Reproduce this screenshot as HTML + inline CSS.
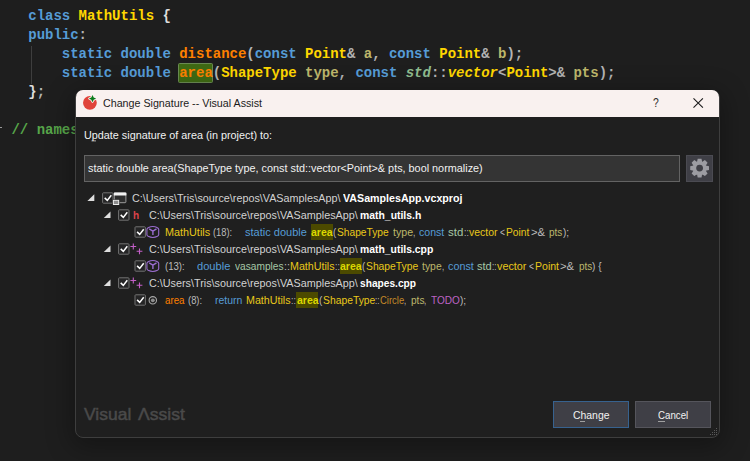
<!DOCTYPE html>
<html>
<head>
<meta charset="utf-8">
<style>
html,body{margin:0;padding:0;}
body{width:750px;height:461px;overflow:hidden;background:#1e1e1e;position:relative;font-family:"Liberation Sans",sans-serif;}
.code{position:absolute;left:-5.3px;top:7px;transform:translateY(0.25px);font-family:"Liberation Mono",monospace;font-weight:bold;font-size:14px;line-height:19px;letter-spacing:-0.015px;white-space:pre;color:#b4b4b4;}
.br{color:#dcdcdc;}
.kw{color:#569cd6;}
.cl{color:#ffd700;}
.fn{color:#ff8000;}
.vr{color:#bdb76b;}
.ns{color:#8fbc8f;font-style:italic;}
.it{font-style:italic;}
.cm{color:#57a64a;}
.chl{position:absolute;left:178px;top:63px;width:35px;height:20px;box-sizing:border-box;background:#3f6a14;border:1px solid #6a8a52;border-radius:1.5px;}
.guide{position:absolute;left:31px;top:46px;width:1px;height:38px;background:#3e3e3e;}
.dlg{position:absolute;left:75px;top:90px;width:645px;height:348px;box-sizing:border-box;border:1px solid #3e3e3e;border-radius:8px;background:#1f1f1f;box-shadow:0 6px 26px 4px rgba(0,0,0,0.3);}
.tb{position:absolute;left:76px;top:90px;width:643px;height:26.5px;background:#f9f1ef;border-radius:7px 7px 0 0;}
.abs{position:absolute;}
.s{position:absolute;white-space:pre;font-size:11px;line-height:16px;transform-origin:0 50%;color:#dcdcdc;}
.bd{font-weight:bold;}
.tt{color:#1b1b1b;}
.w{color:#f1f1f1;}
.p{color:#d2d2d2;}
.bw{color:#ffffff;}
.b{color:#569cd6;}
.y{color:#e8c81a;}
.o{color:#bdb76b;}
.or{color:#ff8000;}
.g{color:#bcbcbc;}
.n{color:#a6c8a6;}
.en{color:#c58a28;}
.m{color:#bd63c5;}
.h{color:#dcd800;}
.va{color:#4a4a4a;-webkit-text-stroke:0.45px #4a4a4a;}
.hb{position:absolute;width:22.2px;height:15.6px;background:#4c4a00;}
.inp{position:absolute;left:84px;top:155px;width:596px;height:27px;box-sizing:border-box;border:1px solid #636363;background:#343434;}
.gear{position:absolute;left:686px;top:155px;width:27px;height:27px;background:#3f3f46;box-sizing:border-box;border:1px solid #4b4b52;}
.btn{position:absolute;top:401px;width:76px;height:27px;box-sizing:border-box;background:#3f3f46;border:1px solid #55555c;}
.cb{position:absolute;width:11px;height:11px;box-sizing:border-box;border:1px solid #6e6e6e;background:#252526;}
</style>
</head>
<body>
<div class="chl"></div>
<div class="code">    <span class="kw">class</span> <span class="cl">MathUtils</span> <span class="br">{</span>
    <span class="kw">public</span>:
        <span class="kw">static</span> <span class="kw">double</span> <span class="fn">distance</span>(<span class="kw">const</span> <span class="cl">Point</span>&amp; <span class="vr">a</span>, <span class="kw">const</span> <span class="cl">Point</span>&amp; <span class="vr">b</span>);
        <span class="kw">static</span> <span class="kw">double</span> <span class="fn">area</span>(<span class="cl">ShapeType</span> <span class="vr">type</span>, <span class="kw">const</span> <span class="ns">std</span>::<span class="cl it">vector</span>&lt;<span class="cl">Point</span>&gt;&amp; <span class="vr">pts</span>);
    <span class="br">}</span>;

  <span class="cm">// namespace</span></div>
<div class="abs" style="left:0;top:127px;width:1.5px;height:1px;background:#9a9a9a"></div>
<div class="guide"></div>

<div class="dlg"></div>
<div class="tb"></div>

<!-- title bar icon + caption buttons -->
<svg class="abs" style="left:80px;top:92px" width="24" height="22" viewBox="0 0 24 22">
  <circle cx="9.9" cy="10.8" r="6.9" fill="#e0443a"/>
  <path d="M12.5 3.1 L13.8 5.3 L16 6.6 L13.8 7.9 L12.5 10.1 L11.2 7.9 L9 6.6 L11.2 5.3 Z" fill="#f9f1ef" stroke="#f9f1ef" stroke-width="1.7" stroke-linejoin="round"/>
  <path d="M12.5 3.0 L13.7 5.4 L16.1 6.6 L13.7 7.8 L12.5 10.2 L11.3 7.8 L8.9 6.6 L11.3 5.4 Z" fill="#0b7a1a"/>
</svg>
<svg class="abs" style="left:635px;top:91px" width="78" height="25" viewBox="0 0 78 25">
  <path d="M58.5 7.3 L67.9 16.7 M67.9 7.3 L58.5 16.7" stroke="#1b1b1b" stroke-width="1.1" fill="none"/>
</svg>
<span class="s" style="left:652.8px;top:95px;font-size:13px;color:#2b2b2b;transform:scaleX(0.8)">?</span>

<div class="inp"></div>
<div class="gear"></div>
<svg class="abs" style="left:686px;top:155px" width="27" height="27" viewBox="-13.6 -13.1 27 27">
  <g fill="#9c9ca2">
    <circle r="6.7"/>
    <g id="t"><path d="M-2.6 -6 L-1.9 -9.4 H1.9 L2.6 -6 V6 L1.9 9.4 H-1.9 L-2.6 6 Z"/></g>
    <use href="#t" transform="rotate(45)"/><use href="#t" transform="rotate(90)"/><use href="#t" transform="rotate(135)"/>
  </g>
  <circle r="3.4" fill="#3f3f46"/>
</svg>

<!-- highlight boxes -->
<div class="hb" style="left:310.8px;top:224px;"></div>
<div class="hb" style="left:340px;top:258px;"></div>
<div class="hb" style="left:296.2px;top:292px;"></div>

<!-- tree glyphs -->
<svg class="abs" style="left:76px;top:186px" width="100" height="125" viewBox="76 186 100 125">
  <g fill="#dedede">
    <path d="M94.3 194.3 L94.3 201.1 L87.4 201.1 Z"/>
    <path d="M110.5 211.4 L110.5 218.1 L103.8 218.1 Z"/>
    <path d="M110.5 245.4 L110.5 252.1 L103.8 252.1 Z"/>
    <path d="M110.5 279.4 L110.5 286.1 L103.8 286.1 Z"/>
  </g>
</svg>
<svg class="abs" style="left:0;top:0" width="750" height="461" viewBox="0 0 750 461">
  <defs>
    <g id="cbx"><rect x="0.6" y="0.5" width="10.4" height="10.4" rx="0.8" fill="#252526" stroke="#727272" stroke-width="1"/><path d="M2.7 5.6 L5.3 8.1 L9.3 2.9" stroke="#ffffff" stroke-width="1.5" fill="none"/></g>
    <g id="pp" fill="none" stroke="#c45fc8" stroke-width="1.1">
      <path d="M-2.9 0 H2.9 M0 -2.9 V2.9"/>
      <path d="M3.3 4.8 H9.1 M6.2 1.9 V7.7"/>
    </g>
    <g id="hex" fill="none" stroke="#9a6dcf" stroke-width="1.1">
      <path d="M-5.9 -2.8 C-5.9 -4.1 -3.2 -5.45 0 -5.45 C3.2 -5.45 5.9 -4.1 5.9 -2.8 V2.8 C5.9 4.1 3.2 5.45 0 5.45 C-3.2 5.45 -5.9 4.1 -5.9 2.8 Z"/>
      <path d="M-3.6 -3.1 L0.1 -0.9 L3.7 -3.1 M0.1 -0.9 V2.9" stroke-width="1.4"/>
    </g>
  </defs>
  <use href="#cbx" x="102" y="192.3"/><use href="#cbx" x="118" y="209.3"/><use href="#cbx" x="134.4" y="226.3"/><use href="#cbx" x="118" y="243.3"/><use href="#cbx" x="134.4" y="260.3"/><use href="#cbx" x="118" y="277.3"/><use href="#cbx" x="134.4" y="294.3"/>
  <!-- project icon -->
  <g>
    <rect x="114.3" y="193" width="11.6" height="9.7" rx="0.8" fill="#2e2e2e" stroke="#9a9a9a" stroke-width="1"/>
    <rect x="113.8" y="192.4" width="12.6" height="3.2" rx="0.6" fill="#f2f2f2"/>
    <rect x="112.6" y="199.4" width="7" height="5.8" fill="#1f1f1f"/>
    <rect x="113.4" y="200.3" width="5.3" height="4.2" fill="#8c8c8c" stroke="#ececec" stroke-width="1"/>
  </g>
  <!-- ++ icons -->
  <use href="#pp" x="133.3" y="246.5"/>
  <use href="#pp" x="133.3" y="280.5"/>
  <!-- class icons -->
  <use href="#hex" x="152.8" y="232"/>
  <use href="#hex" x="152.8" y="266"/>
  <!-- method icon -->
  <circle cx="152.8" cy="300.3" r="3.7" fill="none" stroke="#a8a8a8" stroke-width="1.1"/>
  <circle cx="152.8" cy="300.3" r="1.9" fill="#8f8f8f"/>
  <!-- resize grip -->
  <g fill="#5a5a5a">
    <rect x="716" y="428" width="1" height="1"/>
    <rect x="714" y="430" width="1" height="1"/><rect x="716" y="430" width="1" height="1"/>
    <rect x="712" y="432" width="1" height="1"/><rect x="714" y="432" width="1" height="1"/><rect x="716" y="432" width="1" height="1"/>
    <rect x="710" y="434" width="1" height="1"/><rect x="712" y="434" width="1" height="1"/><rect x="714" y="434" width="1" height="1"/><rect x="716" y="434" width="1" height="1"/>
  </g>
  <!-- access key underlines -->
  <rect x="91.5" y="140.4" width="4.5" height="1" fill="#b0b0b0"/>
</svg>
<span class="s bd" style="left:133.3px;top:206.6px;color:#dc434b;font-size:11.5px;transform:scaleX(0.88)">h</span>

<div class="btn" style="left:553px;border-color:#37628f;"></div>
<div class="btn" style="left:635px;"></div>

<div class="abs" style="left:579.5px;top:420.6px;width:5.5px;height:1px;background:#a0a0a0"></div>
<div class="abs" style="left:658.3px;top:420.6px;width:6.5px;height:1px;background:#a0a0a0"></div>
<span class="s tt" style="left:103.0px;top:95.0px;transform:scaleX(0.9715);">Change Signature -- Visual Assist</span>
<span class="s w" style="left:84.0px;top:127.0px;transform:scaleX(0.9823);">Update signature of area (in project) to:</span>
<span class="s w" style="left:88.0px;top:160.0px;transform:scaleX(0.9855);">static double area(ShapeType type, const std::vector&lt;Point&gt;&amp; pts, bool normalize)</span>
<span class="s p" style="left:132.0px;top:190.0px;transform:scaleX(0.9800);">C:\Users\Tris\source\repos\VASamplesApp\</span>
<span class="s bw bd" style="left:343.2px;top:190.0px;transform:scaleX(0.9693);">VASamplesApp.vcxproj</span>
<span class="s p" style="left:148.5px;top:207.0px;transform:scaleX(0.9814);">C:\Users\Tris\source\repos\VASamplesApp\</span>
<span class="s bw bd" style="left:360.0px;top:207.0px;transform:scaleX(0.9460);">math_utils.h</span>
<span class="s p" style="left:148.5px;top:241.0px;transform:scaleX(0.9814);">C:\Users\Tris\source\repos\VASamplesApp\</span>
<span class="s bw bd" style="left:360.0px;top:241.0px;transform:scaleX(0.9443);">math_utils.cpp</span>
<span class="s p" style="left:148.5px;top:275.0px;transform:scaleX(0.9814);">C:\Users\Tris\source\repos\VASamplesApp\</span>
<span class="s bw bd" style="left:360.0px;top:275.0px;transform:scaleX(0.9251);">shapes.cpp</span>
<span class="s y" style="left:165.0px;top:224.0px;transform:scaleX(0.9838);">MathUtils</span>
<span class="s g" style="left:213.3px;top:224.0px;transform:scaleX(0.8486);">(18):</span>
<span class="s b" style="left:245.3px;top:224.0px;transform:scaleX(1.0022);">static double</span>
<span class="s h bd" style="left:311.2px;top:224.0px;transform:scaleX(0.9540);">area</span>
<span class="s g" style="left:333.2px;top:224.0px;transform:scaleX(0.8715);">(</span>
<span class="s y" style="left:336.8px;top:224.0px;transform:scaleX(0.9289);">ShapeType</span>
<span class="s o" style="left:392.5px;top:224.0px;transform:scaleX(0.9665);">type</span>
<span class="s g" style="left:412.8px;top:224.0px;transform:scaleX(0.7837);">,</span>
<span class="s b" style="left:418.7px;top:224.0px;transform:scaleX(0.9621);">const</span>
<span class="s n" style="left:448.0px;top:224.0px;transform:scaleX(1.0417);">std</span>
<span class="s g" style="left:463.6px;top:224.0px;transform:scaleX(0.7837);">::</span>
<span class="s y" style="left:468.8px;top:224.0px;transform:scaleX(0.9510);">vector</span>
<span class="s g" style="left:499.5px;top:224.0px;transform:scaleX(0.7767);">&lt;</span>
<span class="s y" style="left:505.9px;top:224.0px;transform:scaleX(0.9331);">Point</span>
<span class="s g" style="left:530.7px;top:224.0px;transform:scaleX(1.0243);">&gt;&amp;</span>
<span class="s o" style="left:549.3px;top:224.0px;transform:scaleX(0.9123);">pts</span>
<span class="s g" style="left:563.2px;top:224.0px;transform:scaleX(0.9058);">);</span>
<span class="s g" style="left:164.8px;top:258.0px;transform:scaleX(0.8707);">(13):</span>
<span class="s b" style="left:197.3px;top:258.0px;transform:scaleX(1.0107);">double</span>
<span class="s n" style="left:234.7px;top:258.0px;transform:scaleX(0.9224);">vasamples</span>
<span class="s g" style="left:283.6px;top:258.0px;transform:scaleX(0.9796);">::</span>
<span class="s y" style="left:290.1px;top:258.0px;transform:scaleX(0.9729);">MathUtils</span>
<span class="s g" style="left:335.0px;top:258.0px;transform:scaleX(0.7837);">::</span>
<span class="s h bd" style="left:340.4px;top:258.0px;transform:scaleX(0.9540);">area</span>
<span class="s g" style="left:362.4px;top:258.0px;transform:scaleX(0.8715);">(</span>
<span class="s y" style="left:365.9px;top:258.0px;transform:scaleX(0.9379);">ShapeType</span>
<span class="s o" style="left:421.9px;top:258.0px;transform:scaleX(0.9473);">type</span>
<span class="s g" style="left:441.8px;top:258.0px;transform:scaleX(0.7184);">,</span>
<span class="s b" style="left:447.5px;top:258.0px;transform:scaleX(0.9811);">const</span>
<span class="s n" style="left:477.3px;top:258.0px;transform:scaleX(1.0009);">std</span>
<span class="s g" style="left:492.4px;top:258.0px;transform:scaleX(0.7510);">::</span>
<span class="s y" style="left:497.3px;top:258.0px;transform:scaleX(0.9810);">vector</span>
<span class="s g" style="left:528.5px;top:258.0px;transform:scaleX(0.7767);">&lt;</span>
<span class="s y" style="left:534.7px;top:258.0px;transform:scaleX(0.9570);">Point</span>
<span class="s g" style="left:560.0px;top:258.0px;transform:scaleX(1.0243);">&gt;&amp;</span>
<span class="s o" style="left:578.7px;top:258.0px;transform:scaleX(0.9055);">pts</span>
<span class="s g" style="left:592.4px;top:258.0px;transform:scaleX(0.9129);">) {</span>
<span class="s or" style="left:165.0px;top:292.0px;transform:scaleX(0.8851);">area</span>
<span class="s g" style="left:188.0px;top:292.0px;transform:scaleX(0.8545);">(8):</span>
<span class="s b" style="left:214.7px;top:292.0px;transform:scaleX(0.9530);">return</span>
<span class="s y" style="left:246.1px;top:292.0px;transform:scaleX(0.9729);">MathUtils</span>
<span class="s g" style="left:291.0px;top:292.0px;transform:scaleX(0.7837);">::</span>
<span class="s h bd" style="left:296.5px;top:292.0px;transform:scaleX(0.9585);">area</span>
<span class="s g" style="left:318.7px;top:292.0px;transform:scaleX(0.8987);">(</span>
<span class="s y" style="left:322.5px;top:292.0px;transform:scaleX(0.9397);">ShapeType</span>
<span class="s g" style="left:375.1px;top:292.0px;transform:scaleX(0.7347);">::</span>
<span class="s en" style="left:379.9px;top:292.0px;transform:scaleX(0.8604);">Circle</span>
<span class="s g" style="left:404.4px;top:292.0px;transform:scaleX(0.7184);">,</span>
<span class="s o" style="left:410.5px;top:292.0px;transform:scaleX(0.9191);">pts</span>
<span class="s g" style="left:424.2px;top:292.0px;transform:scaleX(0.7510);">,</span>
<span class="s m" style="left:431.3px;top:292.0px;transform:scaleX(0.9120);">TODO</span>
<span class="s g" style="left:460.4px;top:292.0px;transform:scaleX(0.9058);">);</span>
<span class="s w" style="left:572.8px;top:406.5px;transform:scaleX(0.9469);">Change</span>
<span class="s w" style="left:658.0px;top:406.5px;transform:scaleX(0.8818);">Cancel</span>
<span class="s va" style="left:83.8px;top:405.5px;transform:scaleX(1.0800);font-size:16.2px;line-height:16px;">Visual</span>
<span class="s va" style="left:137.9px;top:405.5px;transform:scaleX(1.0856);font-size:16.2px;line-height:16px;">Λssist</span>
</body>
</html>
